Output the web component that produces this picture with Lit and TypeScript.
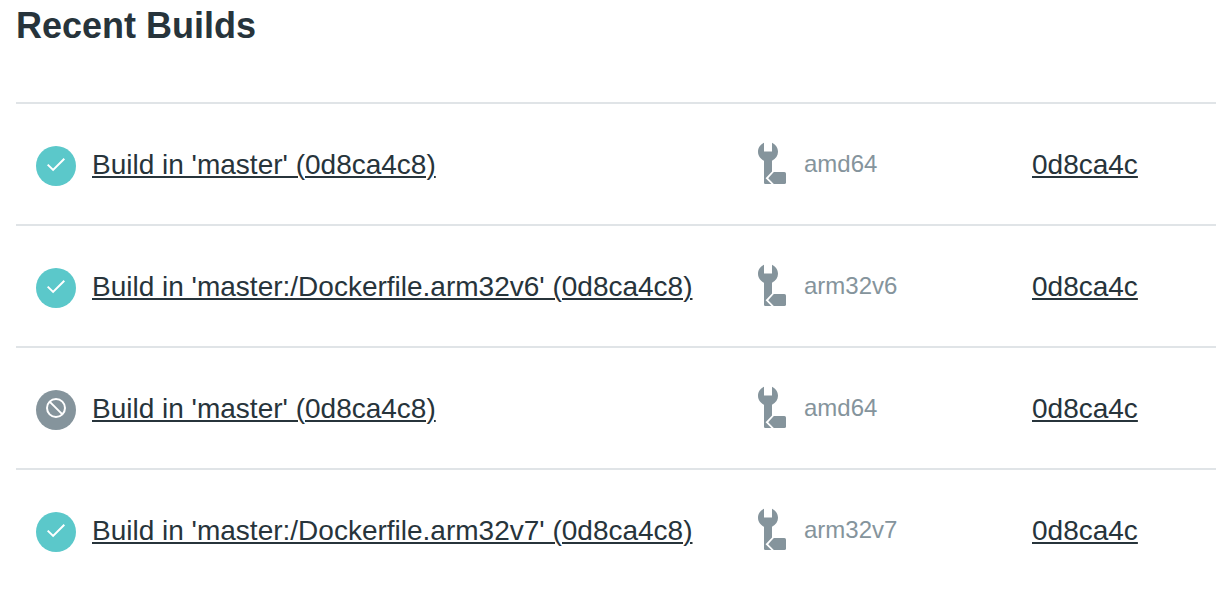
import { LitElement, html, svg, css } from "lit";
import { customElement, property } from "lit/decorators.js";

type Status = "success" | "canceled";

interface Build {
  status: Status;
  title: string;
  tag: string;
  commit: string;
}

const builds: Build[] = [
  { status: "success", title: "Build in 'master' (0d8ca4c8)", tag: "amd64", commit: "0d8ca4c" },
  { status: "success", title: "Build in 'master:/Dockerfile.arm32v6' (0d8ca4c8)", tag: "arm32v6", commit: "0d8ca4c" },
  { status: "canceled", title: "Build in 'master' (0d8ca4c8)", tag: "amd64", commit: "0d8ca4c" },
  { status: "success", title: "Build in 'master:/Dockerfile.arm32v7' (0d8ca4c8)", tag: "arm32v7", commit: "0d8ca4c" },
];

@customElement("status-icon")
export class StatusIcon extends LitElement {
  @property() status: Status = "success";

  static styles = css`
    :host {
      display: block;
      flex: none;
      width: 40px;
      height: 40px;
    }
    .icon {
      display: block;
    }
    .mark {
      fill: none;
      stroke: #fff;
      stroke-width: 2;
    }
    .success {
      fill: #5bc8ca;
    }
    .canceled {
      fill: #85949c;
    }
  `;

  render() {
    const mark =
      this.status === "success"
        ? svg`<path class="mark" d="M11.7 18.6L17.1 23.9L28.3 12.7" />`
        : svg`<circle class="mark" cx="20" cy="18" r="9" /><path class="mark" d="M13.6 11.6L26.4 24.4" />`;
    return html`
      <svg class="icon" width="40" height="40" viewBox="0 0 40 40" role="img" aria-label=${this.status}>
        <circle class=${this.status} cx="20" cy="20" r="20" />
        ${mark}
      </svg>
    `;
  }
}

@customElement("app-root")
export class AppRoot extends LitElement {
  static styles = css`
    :host {
      display: block;
      padding-left: 16px;
      background: #fff;
      color: #27343b;
      font-family: "Liberation Sans", Arial, sans-serif;
    }
    .heading {
      margin: 0;
      padding: 4px 0 54px;
      font-size: 36px;
      line-height: 44px;
      font-weight: 700;
    }
    .builds {
      width: 100%;
      table-layout: fixed;
      border-collapse: separate;
      border-spacing: 0;
    }
    .col-build {
      width: 60%;
    }
    .col-tag {
      width: 23%;
    }
    .cell {
      height: 120px;
      padding: 0 0 0 20px;
      border-top: 2px solid #e0e4e7;
      vertical-align: middle;
    }
    .build,
    .tag {
      display: flex;
      align-items: center;
      gap: 16px;
    }
    .build {
      padding-top: 4px;
    }
    .link {
      color: inherit;
      font-size: 28px;
      line-height: 36px;
      padding-bottom: 2px;
      text-decoration: underline;
      text-decoration-thickness: 2px;
      text-underline-offset: 2px;
    }
    .commit {
      display: block;
      padding-top: 2px;
    }
    .tag {
      color: #85949c;
      font-size: 24px;
      line-height: 32px;
    }
    .wrench {
      flex: none;
      fill: currentColor;
    }
  `;

  render() {
    return html`
      <h2 class="heading">Recent Builds</h2>
      <table class="builds">
        <colgroup>
          <col class="col-build" />
          <col class="col-tag" />
          <col />
        </colgroup>
        <tbody>
          ${builds.map(
            (b) => html`
              <tr>
                <td class="cell">
                  <div class="build">
                    <status-icon .status=${b.status}></status-icon>
                    <a class="link" href="#">${b.title}</a>
                  </div>
                </td>
                <td class="cell">
                  <div class="tag">
                    <svg class="wrench" width="32" height="44" viewBox="0 0 32 44" aria-hidden="true">
                      <path
                        d="M8 0.8V9.5H16V0.8C19.4 2.3 22 5.7 22 9.8C22 13.7 19.8 16.9 16 18.7V29.6L9.6 36.2L15.4 42H9.3Q8 42 8 40.7V18.7C4.3 16.9 2 13.7 2 9.8C2 5.7 4.6 2.3 8 0.8Z"
                      />
                      <path d="M17.8 30H28.4Q30 30 30 31.6V40.4Q30 42 28.4 42H17.8L12.2 36.2Z" />
                    </svg>
                    <span>${b.tag}</span>
                  </div>
                </td>
                <td class="cell">
                  <span class="commit"><a class="link" href="#">${b.commit}</a></span>
                </td>
              </tr>
            `
          )}
        </tbody>
      </table>
    `;
  }
}
